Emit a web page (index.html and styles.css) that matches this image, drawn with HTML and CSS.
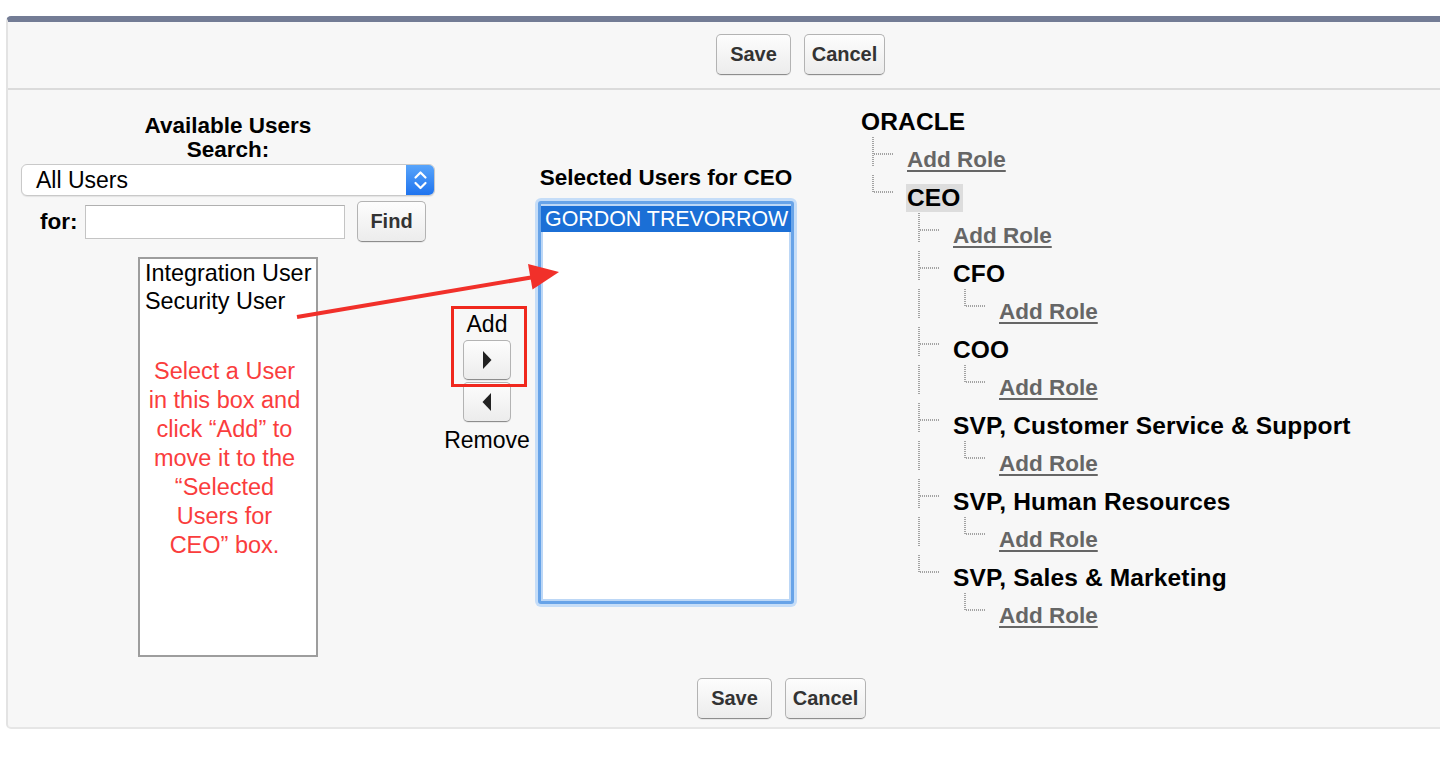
FILE: index.html
```html
<!DOCTYPE html>
<html lang="en">
<head>
<meta charset="utf-8">
<title>Assign Users to Role</title>
<link rel="stylesheet" href="styles.css">
</head>
<body>
<div class="page">
  <svg class="defs" aria-hidden="true">
    <symbol id="tee" viewBox="0 0 46 30"><path d="M12 0V30M13 17H33"/></symbol>
    <symbol id="elbow" viewBox="0 0 46 30"><path d="M12 0V18M13 17H33"/></symbol>
    <symbol id="pipe" viewBox="0 0 46 30"><path d="M12 0V30"/></symbol>
  </svg>

  <div class="panel">
    <div class="pbHeader">
      <button class="btn save">Save</button>
      <button class="btn cancel">Cancel</button>
    </div>

    <div class="pbBody">
      <div class="colLeft">
        <div class="colTitle">Available Users<br>Search:</div>
        <div class="select">
          <span class="selText">All Users</span>
          <span class="stepper">
            <svg width="29" height="32" viewBox="0 0 29 32"><path d="M9.5 13.5L14.5 8.5L19.5 13.5M9.5 19L14.5 24L19.5 19"/></svg>
          </span>
        </div>
        <div class="forRow">
          <label class="forLbl">for:</label>
          <input class="txt" type="text">
          <button class="btn find">Find</button>
        </div>
        <div class="listBox">
          <div class="opt">Integration User</div>
          <div class="opt">Security User</div>
          <div class="note">Select a User<br>in this box and<br>click “Add” to<br>move it to the<br>“Selected<br>Users for<br>CEO” box.</div>
        </div>
      </div>

      <div class="colMid">
        <div class="midLbl">Add</div>
        <button class="btn arrowBtn addBtn">
          <svg width="12" height="20" viewBox="0 0 12 20"><path d="M2 1L10.5 10L2 19Z"/></svg>
        </button>
        <button class="btn arrowBtn remBtn">
          <svg width="12" height="20" viewBox="0 0 12 20"><path d="M10 1L1.5 10L10 19Z"/></svg>
        </button>
        <div class="midLbl remLbl">Remove</div>
        <div class="redBox"></div>
      </div>

      <div class="colSel">
        <div class="colTitle">Selected Users for CEO</div>
        <div class="selBox">
          <div class="opt picked">GORDON TREVORROW</div>
        </div>
      </div>

      <div class="tree">
        <div class="row"><span class="role root">ORACLE</span></div>
        <div class="row"><svg class="cn"><use href="#tee"/></svg><a class="addRole">Add Role</a></div>
        <div class="row"><svg class="cn"><use href="#elbow"/></svg><span class="role hl">CEO</span></div>
        <div class="row"><span class="sp"></span><svg class="cn"><use href="#tee"/></svg><a class="addRole">Add Role</a></div>
        <div class="row"><span class="sp"></span><svg class="cn"><use href="#tee"/></svg><span class="role">CFO</span></div>
        <div class="row"><span class="sp"></span><svg class="cn"><use href="#pipe"/></svg><svg class="cn"><use href="#elbow"/></svg><a class="addRole">Add Role</a></div>
        <div class="row"><span class="sp"></span><svg class="cn"><use href="#tee"/></svg><span class="role">COO</span></div>
        <div class="row"><span class="sp"></span><svg class="cn"><use href="#pipe"/></svg><svg class="cn"><use href="#elbow"/></svg><a class="addRole">Add Role</a></div>
        <div class="row"><span class="sp"></span><svg class="cn"><use href="#tee"/></svg><span class="role">SVP, Customer Service &amp; Support</span></div>
        <div class="row"><span class="sp"></span><svg class="cn"><use href="#pipe"/></svg><svg class="cn"><use href="#elbow"/></svg><a class="addRole">Add Role</a></div>
        <div class="row"><span class="sp"></span><svg class="cn"><use href="#tee"/></svg><span class="role">SVP, Human Resources</span></div>
        <div class="row"><span class="sp"></span><svg class="cn"><use href="#pipe"/></svg><svg class="cn"><use href="#elbow"/></svg><a class="addRole">Add Role</a></div>
        <div class="row"><span class="sp"></span><svg class="cn"><use href="#elbow"/></svg><span class="role">SVP, Sales &amp; Marketing</span></div>
        <div class="row"><span class="sp"></span><span class="sp"></span><svg class="cn"><use href="#elbow"/></svg><a class="addRole">Add Role</a></div>
      </div>
    </div>

    <div class="pbFooter">
      <button class="btn save">Save</button>
      <button class="btn cancel">Cancel</button>
    </div>
  </div>

  <svg class="annotArrow" width="1440" height="776" viewBox="0 0 1440 776" aria-hidden="true">
    <line x1="297" y1="301" x2="534" y2="261"/>
    <polygon points="559,256 532.5,273.5 528,248"/>
  </svg>
</div>
</body>
</html>
```

FILE: styles.css
```css
html, body {
  margin: 0;
  padding: 0;
  background: #ffffff;
  overflow: hidden;
}

body {
  font-family: "Liberation Sans", Arial, Helvetica, sans-serif;
  color: #000;
}

.page {
  position: relative;
  width: 1440px;
  height: 776px;
}

.defs {
  position: absolute;
  width: 0;
  height: 0;
  overflow: hidden;
}

.panel {
  margin: 16px 0 0 6px;
  background: #f7f7f7;
  border-top: 6px solid #737c95;
  border-left: 2px solid #e3e3e3;
  border-bottom: 2px solid #e6e6e6;
  border-radius: 5px 0 0 5px;
}

/* buttons */
.btn {
  box-sizing: border-box;
  height: 41px;
  margin: 0;
  padding: 0;
  font-family: "Liberation Sans", Arial, Helvetica, sans-serif;
  font-weight: bold;
  font-size: 20px;
  color: #333;
  background: linear-gradient(#fdfdfd, #ececec);
  border: 1px solid #b3b3b3;
  border-bottom-color: #8d8d8d;
  border-radius: 5px;
  box-shadow: 0 1px 0 rgba(0, 0, 0, 0.06);
}

.save { width: 75px; }
.cancel { width: 81px; }

.pbHeader {
  box-sizing: border-box;
  height: 68px;
  padding: 12px 0 0 708px;
  display: flex;
  gap: 13px;
  border-bottom: 2px solid #dbdbdb;
}

.pbFooter {
  display: flex;
  gap: 13px;
  padding: 21px 0 8px 689px;
}

.pbBody {
  display: flex;
  align-items: flex-start;
  padding-left: 13px;
}

/* left column */
.colLeft {
  width: 414px;
  padding-top: 24px;
  display: flex;
  flex-direction: column;
}

.colTitle {
  font-weight: bold;
  font-size: 22.5px;
  line-height: 24px;
  text-align: center;
}

.select {
  box-sizing: border-box;
  margin-top: 2px;
  height: 32px;
  display: flex;
  align-items: center;
  background: #fff;
  border: 1px solid #c9c9c9;
  border-radius: 6px;
  box-shadow: 0 1px 1px rgba(0, 0, 0, 0.08);
  overflow: hidden;
}

.selText {
  flex: 1;
  padding-left: 14px;
  font-size: 23px;
  line-height: 30px;
}

.stepper {
  width: 29px;
  height: 32px;
  margin: -1px -1px -1px 0;
  background: linear-gradient(#5aa6fb, #1d72ee);
  border-radius: 0 6px 6px 0;
  display: flex;
}

.stepper path {
  fill: none;
  stroke: #fff;
  stroke-width: 2.2;
  stroke-linecap: round;
  stroke-linejoin: round;
}

.forRow {
  margin-top: 5px;
  height: 41px;
  display: flex;
  align-items: center;
  padding-left: 19px;
}

.forLbl {
  font-weight: bold;
  font-size: 22.5px;
  width: 45px;
}

.txt {
  box-sizing: border-box;
  width: 260px;
  height: 34px;
  margin: 0;
  background: #fff;
  border: 1px solid #c4c4c4;
  border-top-color: #b0b0b0;
}

.find {
  width: 69px;
  margin-left: 12px;
}

.listBox {
  box-sizing: border-box;
  align-self: center;
  margin-top: 15px;
  width: 180px;
  height: 400px;
  background: #fff;
  border: 2px solid #9d9d9d;
  padding-top: 0;
}

.opt {
  font-size: 23.4px;
  line-height: 28px;
  padding-left: 5px;
  white-space: nowrap;
}

.note {
  margin-top: 42px;
  padding-right: 7px;
  text-align: center;
  color: #fa3d3d;
  font-size: 23.5px;
  line-height: 29px;
}

/* middle column */
.colMid {
  position: relative;
  width: 84px;
  margin: 222px 0 0 10px;
  display: flex;
  flex-direction: column;
  align-items: center;
}

.midLbl {
  font-size: 23px;
  line-height: 24px;
}

.arrowBtn {
  width: 48px;
  height: 40px;
  display: flex;
  align-items: center;
  justify-content: center;
}

.arrowBtn path { fill: #222; }

.addBtn { margin-top: 4px; }
.remBtn { margin-top: 2px; }
.remLbl { margin-top: 6px; }

.redBox {
  position: absolute;
  left: 6px;
  top: -6px;
  width: 76px;
  height: 81px;
  box-sizing: border-box;
  border: 3px solid #f0281e;
}

/* selected column */
.colSel {
  width: 262px;
  margin: 76px 0 0 6px;
  display: flex;
  flex-direction: column;
}

.selBox {
  box-sizing: border-box;
  margin: 11px 3px 0;
  height: 403px;
  background: #fff;
  border: 3px solid #67a3e8;
  border-radius: 3px;
  box-shadow: 0 0 0 3px #c5ddf8, inset 0 0 0 2px #bcd7f6;
  padding-top: 2px;
}

.picked {
  background: #1b6fd6;
  color: #fff;
  font-size: 21.4px;
  line-height: 26px;
  padding-left: 4px;
}

/* tree */
.tree {
  margin: 13px 0 0 64px;
}

.row {
  height: 38px;
  display: flex;
  align-items: center;
  white-space: nowrap;
}

.sp {
  width: 46px;
  flex: none;
}

.cn {
  width: 46px;
  height: 30px;
  flex: none;
  align-self: flex-start;
  margin-top: -4px;
  fill: none;
  stroke: #a3a3a3;
  stroke-width: 2;
  stroke-dasharray: 1 1;
}

.role {
  font-weight: bold;
  font-size: 24.5px;
  letter-spacing: 0.15px;
  line-height: 28px;
}

.hl {
  background: #dddddd;
  margin-left: -1px;
  padding: 0 2px 0 1px;
}

.addRole {
  font-weight: bold;
  font-size: 22.5px;
  line-height: 28px;
  color: #666;
  text-decoration: underline;
  text-decoration-thickness: 2px;
  text-underline-offset: 3px;
}

/* annotation arrow overlay */
.annotArrow {
  position: absolute;
  left: 0;
  top: 0;
  pointer-events: none;
}

.annotArrow line {
  stroke: #f1302a;
  stroke-width: 4;
}

.annotArrow polygon {
  fill: #f1302a;
}
```
